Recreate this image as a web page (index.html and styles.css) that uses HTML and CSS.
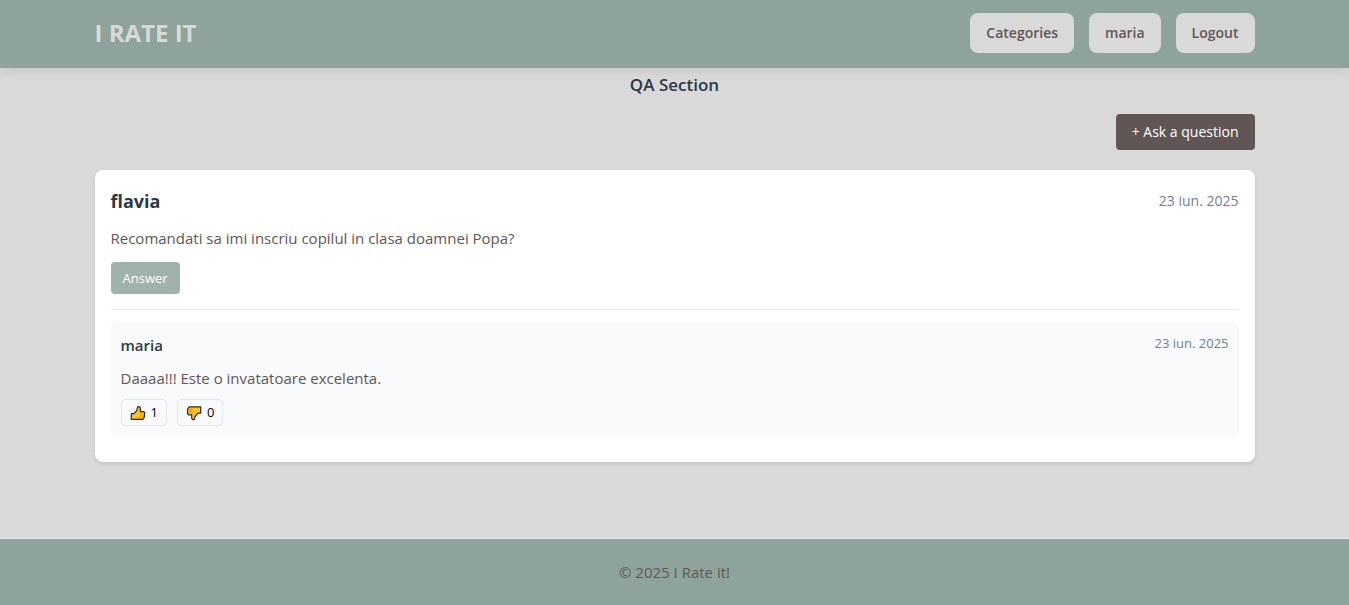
FILE: index.html
```html
<!DOCTYPE html>
<html lang="en">
<head>
  <meta charset="utf-8">
  <meta name="viewport" content="width=device-width, initial-scale=1">
  <title>I Rate it</title>
  <link rel="stylesheet" href="styles.css">
</head>
<body>
  <header class="site-header">
    <div class="container header-inner">
      <a class="brand" href="#">I RATE IT</a>
      <nav class="nav">
        <a class="nav-link" href="#">Categories</a>
        <a class="nav-link" href="#">maria</a>
        <button class="nav-link" type="button">Logout</button>
      </nav>
    </div>
  </header>

  <main class="container content">
    <h1 class="page-title">QA Section</h1>
    <div class="toolbar">
      <button class="ask-button" type="button">+ Ask a question</button>
    </div>

    <article class="question">
      <div class="row">
        <h2 class="question-author">flavia</h2>
        <time class="question-date" datetime="2025-06-23">23 iun. 2025</time>
      </div>
      <p class="question-text">Recomandati sa imi inscriu copilul in clasa doamnei Popa?</p>
      <button class="answer-button" type="button">Answer</button>

      <section class="answers">
        <div class="answer">
          <div class="row row-top">
            <h3 class="answer-author">maria</h3>
            <time class="answer-date" datetime="2025-06-23">23 iun. 2025</time>
          </div>
          <p class="answer-text">Daaaa!!! Este o invatatoare excelenta.</p>
          <div class="votes">
            <button class="vote" type="button" aria-label="Like, 1">
              <svg class="thumb" viewBox="0 0 16 16" aria-hidden="true">
                <path class="thumb-hand" d="M1.3 8.6h2.6l2.7-2.8 1.2-4.2h1.5l1.1 1.2v3.8h3.4l1 1-.2 1.8-.2 1.8-.4 1.7-1.3 1.5H1.3z"/>
                <path class="thumb-shade" d="M6.2 13h6.2M10.4 9h3.2M10.4 11h2.9"/>
              </svg>
              <span>1</span>
            </button>
            <button class="vote" type="button" aria-label="Dislike, 0">
              <svg class="thumb" viewBox="0 0 16 16" aria-hidden="true">
                <path class="thumb-hand" d="M14.7 1.8v6.4h-2.6L9.4 11l-1.2 3.6H6.7l-1-1.2V9.8H2.6l-1-1 .1-1.8-.2-1.8.5-1.8 1.3-1.6z"/>
                <path class="thumb-shade" d="M2.6 4.2h4M2.4 6.1h4M2.6 8h4"/>
              </svg>
              <span>0</span>
            </button>
          </div>
        </div>
      </section>
    </article>
  </main>

  <footer class="site-footer">
    <p class="copyright">© 2025 I Rate it!</p>
  </footer>
</body>
</html>
```

FILE: styles.css
```css
* {
  box-sizing: border-box;
}

body {
  display: flex;
  flex-direction: column;
  min-height: 100vh;
  margin: 0;
  background: #d9d9d9;
  color: #615656;
  font-family: "Segoe UI", "Open Sans", "Noto Sans", sans-serif;
  font-size: 15px;
  line-height: 24px;
}

h1, h2, h3, p {
  margin: 0;
}

button {
  border: 0;
  font-family: inherit;
  cursor: pointer;
}

.container {
  width: 100%;
  max-width: 1190px;
  margin: 0 auto;
  padding: 0 15px;
}

.site-header {
  padding: 13px 0 15px;
  background: #8ea39b;
  box-shadow: 0 2px 10px rgba(0, 0, 0, 0.1);
}

.header-inner,
.row {
  display: flex;
  align-items: center;
  justify-content: space-between;
}

.brand {
  color: #d9d9d9;
  font-size: 24px;
  font-weight: 700;
  line-height: 40px;
  text-decoration: none;
}

.nav {
  display: flex;
  gap: 15px;
}

.nav-link {
  padding: 8px 16px;
  border-radius: 8px;
  background: #d9d9d9;
  color: #615656;
  font-size: 14px;
  font-weight: 600;
  line-height: 24px;
  text-decoration: none;
}

.content {
  flex: 1;
}

.page-title {
  padding: 4px 0 16px;
  color: #2d3748;
  font-size: 17px;
  font-weight: 600;
  line-height: 26px;
  text-align: center;
}

.toolbar {
  display: flex;
  justify-content: flex-end;
  margin-bottom: 20px;
}

.ask-button {
  padding: 8px 16px;
  border-radius: 4px;
  background: #615656;
  color: #fff;
  font-size: 14px;
  line-height: 20px;
}

.question {
  padding: 16px 16px 26px;
  border-radius: 8px;
  background: #fff;
  box-shadow: 0 2px 4px rgba(0, 0, 0, 0.1);
}

.question-author {
  color: #2d3748;
  font-size: 18px;
  font-weight: 700;
  line-height: 30px;
}

.question-date,
.answer-date {
  color: #718096;
  font-size: 14px;
  line-height: 22px;
}

.answer-date {
  font-size: 13px;
}

.question-text {
  padding: 10px 0 12px;
}

.answer-button {
  display: block;
  padding: 6px 12px;
  border-radius: 4px;
  background: #9fb3ab;
  color: #fff;
  font-size: 13px;
  line-height: 20px;
}

.answers {
  margin-top: 15px;
  padding-top: 12px;
  border-top: 1px solid #e2e8f0;
}

.answer {
  padding: 10px;
  border-radius: 6px;
  background: #f9fafc;
}

.row-top {
  align-items: flex-start;
}

.answer-author {
  color: #2d3748;
  font-size: 15px;
  font-weight: 600;
  line-height: 26px;
}

.answer-text {
  padding: 8px 0 9px;
}

.votes {
  display: flex;
  gap: 10px;
}

.vote {
  display: flex;
  align-items: center;
  gap: 5px;
  padding: 2px 8px;
  border: 1px solid #e2e8f0;
  border-radius: 4px;
  background: transparent;
  color: #000;
  font-size: 13px;
  line-height: 21px;
}

.thumb {
  width: 16px;
  height: 16px;
}

.thumb-hand {
  fill: #ffc02e;
  stroke: #2b2b2b;
  stroke-width: 1.2;
  stroke-linejoin: round;
}

.thumb-shade {
  fill: none;
  stroke: #e08a10;
  stroke-width: 0.8;
}

.site-footer {
  padding: 21px 15px;
  border-top: 1px solid #e2e8f0;
  background: #8ea39b;
  text-align: center;
}
```
